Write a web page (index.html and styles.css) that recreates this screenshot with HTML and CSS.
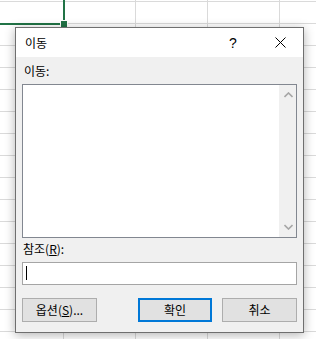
FILE: index.html
```html
<!DOCTYPE html>
<html>
<head>
    <meta charset="utf-8">
    <title>이동</title>
    <link rel="stylesheet" href="styles.css">
</head>
<body>
    <div class="sheet">
        <div class="active-cell"></div>
        <div class="fill-handle"></div>
    </div>

    <div class="dialog">
        <div class="title-bar">
            <span class="title">이동</span>
            <span class="help">?</span>
            <span class="close">
                <svg width="11" height="11" viewBox="0 0 11 11">
                    <path d="M0.5 0.5 L10.5 10.5 M10.5 0.5 L0.5 10.5" stroke="#000" stroke-width="1" fill="none"/>
                </svg>
            </span>
        </div>

        <div class="content">
            <div class="field-label">이동:</div>
            <div class="listbox">
                <div class="list-items"></div>
                <div class="scrollbar">
                    <svg width="9" height="6" viewBox="0 0 9 6">
                        <path d="M0.5 5 L4.5 1 L8.5 5" stroke="#a6a6a6" stroke-width="1.6" fill="none"/>
                    </svg>
                    <svg width="9" height="6" viewBox="0 0 9 6">
                        <path d="M0.5 1 L4.5 5 L8.5 1" stroke="#a6a6a6" stroke-width="1.6" fill="none"/>
                    </svg>
                </div>
            </div>

            <div class="field-label ref-label">참조(<u>R</u>):</div>
            <div class="text-input"><span class="caret"></span></div>

            <div class="button-group">
                <button type="button" class="btn btn-options">옵션(<u>S</u>)...</button>
                <button type="button" class="btn btn-default">확인</button>
                <button type="button" class="btn">취소</button>
            </div>
        </div>
    </div>
</body>
</html>
```

FILE: styles.css
```css
* {
    box-sizing: border-box;
}

body {
    margin: 0;
    width: 316px;
    height: 339px;
    overflow: hidden;
    font-family: 'Noto Sans CJK KR', 'Noto Sans', sans-serif;
    font-size: 12px;
    color: #000;
    background: #fff;
}

/* Excel worksheet behind the dialog */
.sheet {
    position: relative;
    width: 316px;
    height: 339px;
    background-color: #fff;
    background-image:
        linear-gradient(to right, #dadada 1px, transparent 1px),
        linear-gradient(to bottom, #dadada 1px, transparent 1px);
    background-size: 72px 22px;
    background-position: 63px 23px;
}

.active-cell {
    position: absolute;
    left: -4px;
    top: -4px;
    width: 69px;
    height: 29px;
    border: 2px solid #217346;
}

.fill-handle {
    position: absolute;
    left: 61px;
    top: 21px;
    width: 6px;
    height: 6px;
    background: #217346;
    outline: 1px solid #fff;
}

/* Go To dialog */
.dialog {
    position: absolute;
    left: 15px;
    top: 27px;
    width: 289px;
    height: 306px;
    border: 1px solid #6f6f6f;
    background: #f0f0f0;
    box-shadow: 0 2px 10px rgba(0, 0, 0, 0.3);
    display: flex;
    flex-direction: column;
}

.title-bar {
    height: 30px;
    background: #fff;
    display: flex;
    align-items: center;
    padding: 0 0 0 9px;
}

.title {
    flex: 1;
    line-height: 16px;
}

.help {
    width: 10px;
    margin-right: 36px;
    font-family: 'Liberation Sans', sans-serif;
    font-size: 14px;
    line-height: 16px;
}

.close {
    width: 11px;
    height: 11px;
    margin-right: 17px;
    display: flex;
}

.content {
    flex: 1;
    padding: 6px 6px 10px 6px;
    display: flex;
    flex-direction: column;
}

.field-label {
    height: 16px;
    line-height: 16px;
    padding-left: 2px;
    margin-bottom: 5px;
}

.ref-label {
    margin-top: 3px;
    padding-left: 1px;
}

.listbox {
    height: 154px;
    border: 1px solid #828790;
    background: #fff;
    display: flex;
}

.list-items {
    flex: 1;
}

.scrollbar {
    width: 17px;
    background: #f0f0f0;
    display: flex;
    flex-direction: column;
    justify-content: space-between;
    align-items: center;
    padding: 7px 0 7px 1px;
}

.text-input {
    height: 23px;
    border: 1px solid #a5a5a5;
    background: #fff;
    padding: 3px 0 0 3px;
}

.caret {
    display: block;
    width: 1px;
    height: 14px;
    background: #000;
}

.button-group {
    display: flex;
    gap: 10px;
    margin-top: 13px;
}

.btn {
    width: 75px;
    height: 24px;
    padding: 0;
    border: 1px solid #adadad;
    background: #e1e1e1;
    font-family: inherit;
    font-size: 12px;
    line-height: 16px;
    color: #000;
}

.btn-options {
    margin-right: auto;
}

.btn-default {
    border: 2px solid #0078d7;
    width: 74px;
}
```
